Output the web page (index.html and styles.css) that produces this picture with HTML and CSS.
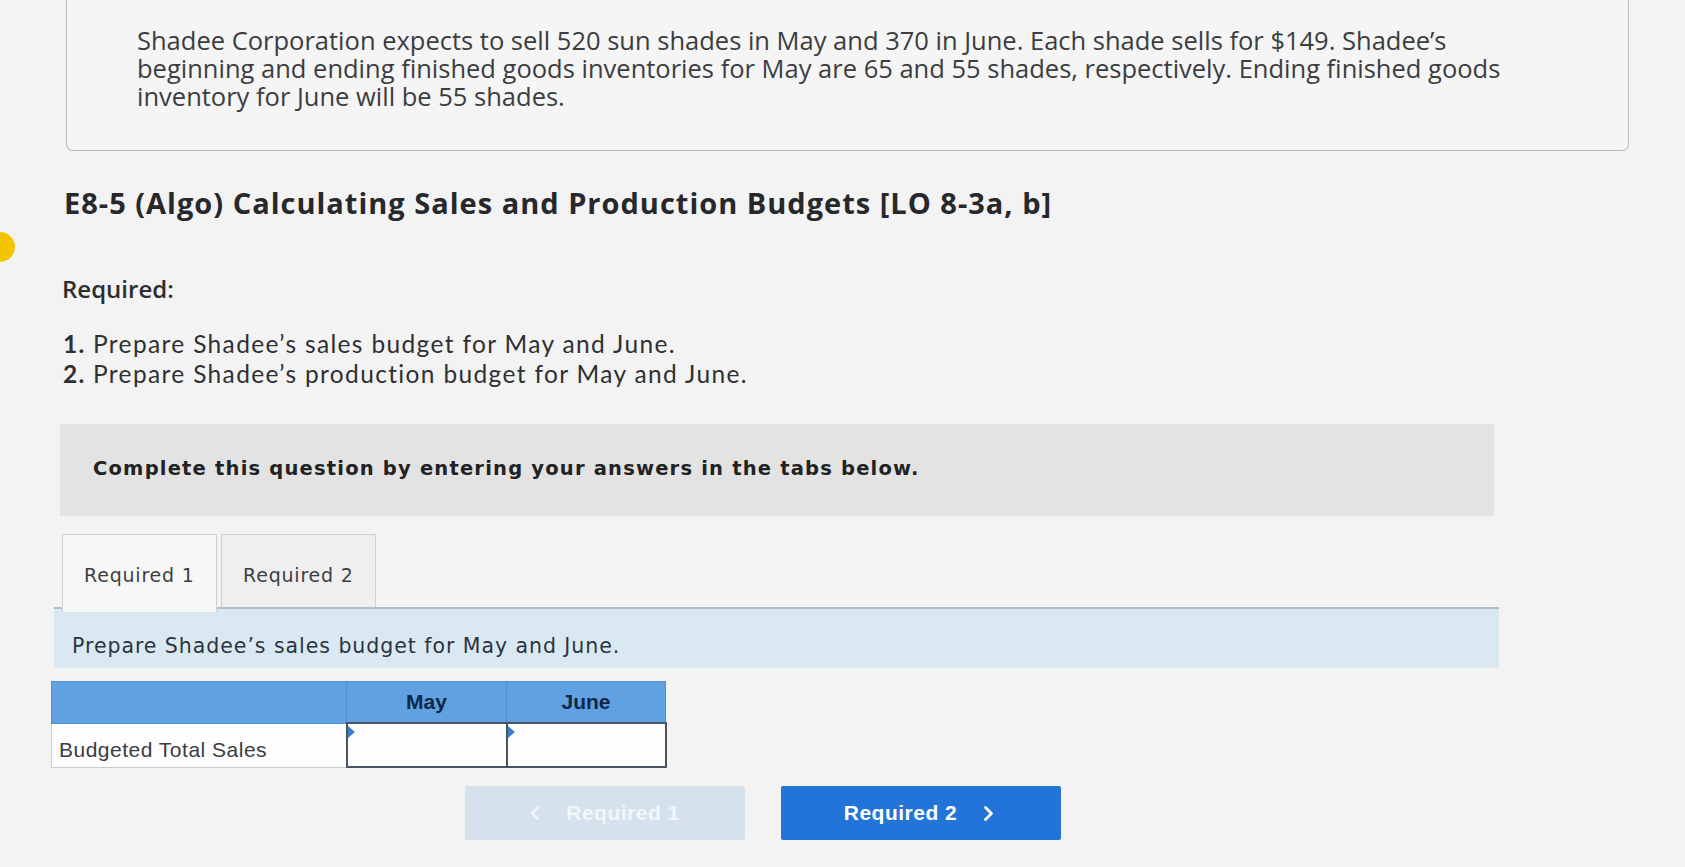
FILE: index.html
```html
<!DOCTYPE html>
<html lang="en">
<head>
<meta charset="utf-8">
<title>E8-5 (Algo) Calculating Sales and Production Budgets</title>
<link rel="stylesheet" href="styles.css">
</head>
<body>
<span class="marker"></span>
<main class="page">
  <section class="intro">
    <p>Shadee Corporation expects to sell 520 sun shades in May and 370 in June. Each shade sells for $149. Shadee’s beginning and ending finished goods inventories for May are 65 and 55 shades, respectively. Ending finished goods inventory for June will be 55 shades.</p>
  </section>

  <h1 class="title">E8-5 (Algo) Calculating Sales and Production Budgets [LO 8-3a, b]</h1>

  <h2 class="req-label">Required:</h2>
  <ol class="req-list">
    <li>Prepare Shadee’s sales budget for May and June.</li>
    <li>Prepare Shadee’s production budget for May and June.</li>
  </ol>

  <div class="instructions">Complete this question by entering your answers in the tabs below.</div>

  <div class="tabs">
    <div class="tab active">Required 1</div>
    <div class="tab">Required 2</div>
  </div>
  <div class="band">Prepare Shadee’s sales budget for May and June.</div>

  <table class="budget">
    <thead>
      <tr><th class="blank"></th><th>May</th><th>June</th></tr>
    </thead>
    <tbody>
      <tr>
        <td class="label">Budgeted Total Sales</td>
        <td class="input"><span class="flag"></span></td>
        <td class="input"><span class="flag"></span></td>
      </tr>
    </tbody>
  </table>

  <div class="nav">
    <button class="btn disabled">
      <svg class="chev left" width="10" height="16" viewBox="0 0 10 16" aria-hidden="true"><path d="M8 2 L2 8 L8 14" fill="none" stroke="currentColor" stroke-width="2.4" stroke-linecap="round" stroke-linejoin="round"/></svg>
      Required 1
    </button>
    <button class="btn primary">
      Required 2
      <svg class="chev right" width="11" height="17" viewBox="0 0 11 17" aria-hidden="true"><path d="M2.5 2.5 L8.5 8.5 L2.5 14.5" fill="none" stroke="currentColor" stroke-width="2.8" stroke-linecap="round" stroke-linejoin="round"/></svg>
    </button>
  </div>
</main>
</body>
</html>
```

FILE: styles.css
```css
html, body {
  margin: 0;
  padding: 0;
}
body {
  background: #f2f3f2;
  font-family: "Open Sans", Lato, "Liberation Sans", sans-serif;
  color: #333;
  height: 867px;
  overflow: hidden;
  position: relative;
}
.marker {
  position: absolute;
  left: -15px;
  top: 232px;
  width: 30px;
  height: 30px;
  border-radius: 50%;
  background: #f5c400;
}
.page {
  padding-left: 60px;
  display: flex;
  flex-direction: column;
  align-items: flex-start;
}
.intro {
  margin-left: 6px;
  width: 1563px;
  border: 1.5px solid #b9bbbb;
  border-top: none;
  border-radius: 0 0 7px 7px;
  background: #f4f5f4;
  padding: 26px 0 40px 70px;
  box-sizing: border-box;
}
.intro p {
  margin: 0;
  font-size: 25.5px;
  line-height: 28px;
  color: #3b3d40;
  max-width: 1385px;
}
.title {
  margin: 34px 0 0 4px;
  font-size: 29px;
  letter-spacing: 1px;
  line-height: 36px;
  font-weight: 700;
  color: #26282b;
}
.req-label {
  margin: 53px 0 0 2px;
  font-size: 24px;
  line-height: 30px;
  font-weight: 600;
  color: #2c2e31;
}
.req-list {
  margin: 25px 0 0 7px;
  padding-left: 26px;
  font-family: Lato, "Open Sans", sans-serif;
  font-size: 24.5px;
  letter-spacing: 1.35px;
  line-height: 30px;
  color: #2e3033;
}
.req-list li::marker {
  font-weight: 700;
}
.instructions {
  margin-top: 35px;
  width: 1434px;
  height: 92px;
  box-sizing: border-box;
  background: #e2e3e2;
  padding: 33px 0 0 33px;
  font-family: "DejaVu Sans", Verdana, sans-serif;
  font-weight: 700;
  font-size: 19.5px;
  letter-spacing: 1.2px;
  line-height: 24px;
  color: #222;
}
.tabs {
  margin: 18px 0 0 2px;
  display: flex;
  gap: 4px;
  height: 73px;
  position: relative;
  z-index: 1;
}
.tab {
  width: 155px;
  box-sizing: border-box;
  border: 1.5px solid #cfd0cf;
  border-bottom: none;
  background: #eeefee;
  padding-top: 28px;
  padding-left: 21px;
  font-family: "DejaVu Sans", Verdana, sans-serif;
  font-size: 19px;
  letter-spacing: 0.8px;
  line-height: 24px;
  color: #3d3f42;
}
.tab.active {
  background: #f6f7f6;
  margin-bottom: -5px;
}
.band {
  margin-left: -6px;
  width: 1445px;
  height: 61px;
  box-sizing: border-box;
  border-top: 2px solid #aebdc8;
  background: #dae8f1;
  padding: 25px 0 0 18px;
  font-family: "DejaVu Sans", Verdana, sans-serif;
  font-size: 20.5px;
  letter-spacing: 0.95px;
  line-height: 24px;
  color: #2b3442;
}
.budget {
  margin: 13px 0 0 -9px;
  border-collapse: collapse;
  font-family: "Liberation Sans", Arial, sans-serif;
  font-size: 21px;
}
.budget th {
  background: #60a1e2;
  height: 40px;
  padding: 0;
  border: 1.5px solid #4f8fd0;
  color: #0e2747;
  font-weight: 700;
  text-align: center;
}
.budget th.blank {
  width: 294px;
}
.budget th:nth-child(2) { width: 159px; }
.budget th:nth-child(3) { width: 158px; }
.budget td {
  height: 42px;
  padding: 0;
  background: #fdfdfd;
}
.budget td.label {
  border: 1.5px solid #c9cccc;
  padding: 10px 0 0 7px;
  box-sizing: border-box;
  letter-spacing: 0.5px;
  color: #3a3d42;
  vertical-align: middle;
}
.budget td.input {
  border: 2px solid #4a5362;
  position: relative;
}
.flag {
  position: absolute;
  left: 0;
  top: 2px;
  width: 0;
  height: 0;
  border-top: 6px solid transparent;
  border-bottom: 6px solid transparent;
  border-left: 7px solid #3f7fcf;
}
.nav {
  margin: 18px 0 0 405px;
  display: flex;
  gap: 36px;
}
.btn {
  width: 280px;
  height: 54px;
  border: none;
  border-radius: 2px;
  font-family: "Liberation Sans", Arial, sans-serif;
  font-weight: 700;
  font-size: 21px;
  letter-spacing: 0.5px;
  display: flex;
  align-items: center;
  justify-content: center;
}
.btn.disabled {
  background: #d5e2ed;
  color: #f3f6f9;
}
.btn.primary {
  background: #2374d8;
  color: #ffffff;
  padding-right: 10px;
}
.chev.left {
  margin-right: 26px;
}
.chev.right {
  margin-left: 26px;
}
```
